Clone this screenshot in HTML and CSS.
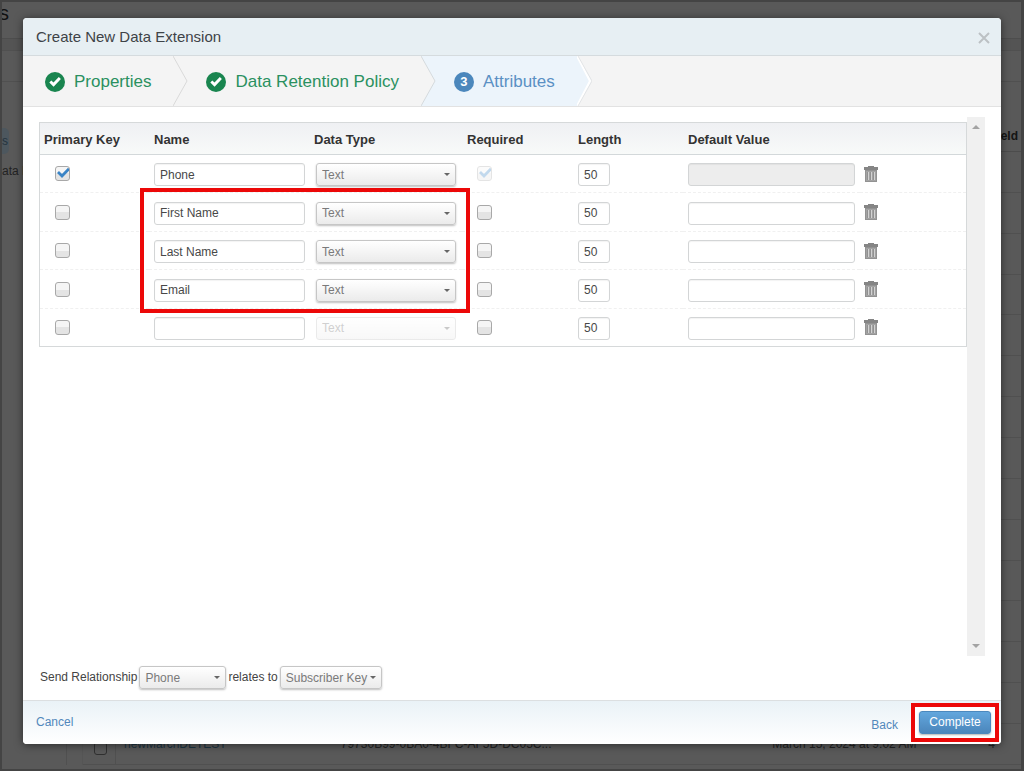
FILE: index.html
```html
<!DOCTYPE html>
<html lang="en">
<head>
<meta charset="utf-8">
<title>Create New Data Extension</title>
<link rel="stylesheet" href="styles.css">
</head>
<body>
<svg class="defs" aria-hidden="true">
  <symbol id="done" viewBox="0 0 20 20">
    <circle cx="10" cy="10" r="10" fill="#19854f"/>
    <path d="M4.3 10.6 6.3 8.5 8.5 10.6 13.8 5 15.9 7 8.6 14.7Z" fill="#fff"/>
  </symbol>
  <symbol id="trash" viewBox="0 0 14 16">
    <path d="M4 0h6v1h4v3H0V1h4z" fill="#858585"/>
    <path d="M1 4h12v12H1z" fill="#a3a3a3"/>
    <path d="M1 4h12v1H1zM1 4h1v12H1zM12 4h1v12h-1zM1 15h12v1H1z" fill="#929292"/>
    <path d="M4 6h1v8H4zM7 6h1v8H7zM10 6h1v8h-1z" fill="#d2d2d2"/>
    <path d="M3 6h1v8H3zM6 6h1v8H6zM9 6h1v8H9z" fill="#919191"/>
  </symbol>
</svg>

<div class="page" aria-hidden="true">
  <div class="page-title">s</div>
  <div class="page-bar"></div>
  <div class="page-bar"></div>
  <div class="page-main">
    <div class="page-side">
      <span class="side-tile">s</span>
      <span class="side-label">ata E</span>
    </div>
    <div class="page-table">
      <div class="page-head">Field Count</div>
      <div class="page-row"></div><div class="page-row"></div><div class="page-row"></div>
      <div class="page-row"></div><div class="page-row"></div><div class="page-row"></div>
      <div class="page-row"></div><div class="page-row"></div><div class="page-row"></div>
      <div class="page-row"></div><div class="page-row"></div><div class="page-row"></div>
      <div class="page-row"></div><div class="page-row"></div>
      <div class="page-row page-record">
        <span class="record-check"><span class="record-box"></span></span>
        <span class="record-name">newMarchDETEST</span>
        <span class="record-key">79730B99-0BA0-4BFC-AF5D-DC05C...</span>
        <span class="record-date">March 15, 2024 at 9:02 AM</span>
        <span>4</span>
      </div>
    </div>
  </div>
</div>

<div class="overlay">
<form class="modal" role="dialog" aria-labelledby="title">
  <header class="modal-head">
    <h1 id="title">Create New Data Extension</h1>
    <button type="button" class="close" aria-label="Close"><svg viewBox="0 0 12 12" width="12" height="12"><path d="M1 1 11 11M11 1 1 11" stroke="#bcc1c4" stroke-width="2"/></svg></button>
  </header>

  <ol class="steps">
    <li class="step">
      <svg class="step-icon"><use href="#done"/></svg><span>Properties</span>
      <svg class="chevron" viewBox="0 0 15 50" preserveAspectRatio="none"><path d="M0 0 14 25 0 50" fill="none" stroke="#d9d9d9"/></svg>
    </li>
    <li class="step">
      <svg class="step-icon"><use href="#done"/></svg><span>Data Retention Policy</span>
      <svg class="chevron" viewBox="0 0 15 50" preserveAspectRatio="none"><path d="M0 0H15V50H0L14 25Z" fill="#ecf4fb"/><path d="M0 0 14 25 0 50" fill="none" stroke="#d5dadd"/></svg>
    </li>
    <li class="step current" aria-current="step">
      <span class="step-icon number">3</span><span>Attributes</span>
      <svg class="chevron" viewBox="0 0 15 50" preserveAspectRatio="none"><path d="M0 0H15V50H0Z" fill="#f4f4f4"/><path d="M0 0 14 25 0 50Z" fill="#ecf4fb"/><path d="M0 0 13 25 0 50" fill="none" stroke="#fff" stroke-width="2"/><path d="M1 0 15 25 1 50" fill="none" stroke="#e2e4e6"/></svg>
    </li>
  </ol>

  <div class="modal-body">
    <div class="scroll-area">
      <div class="table-wrap">
        <table class="fields">
          <colgroup><col class="c-key"><col class="c-name"><col class="c-type"><col class="c-req"><col class="c-len"><col class="c-def"><col></colgroup>
          <thead>
            <tr><th>Primary Key</th><th>Name</th><th>Data Type</th><th>Required</th><th>Length</th><th>Default Value</th><th></th></tr>
          </thead>
          <tbody>
            <tr>
              <td><input type="checkbox" class="check" aria-label="Primary key" checked></td>
              <td><input type="text" class="text" aria-label="Name" value="Phone"></td>
              <td class="type"><select class="select" aria-label="Data type"><option>Text</option></select></td>
              <td><input type="checkbox" class="check" aria-label="Required" checked disabled></td>
              <td><input type="text" class="text length" aria-label="Length" value="50"></td>
              <td><input type="text" class="text" aria-label="Default value" disabled></td>
              <td><button type="button" class="trash" aria-label="Delete"><svg><use href="#trash"/></svg></button></td>
            </tr>
            <tr>
              <td><input type="checkbox" class="check" aria-label="Primary key"></td>
              <td><input type="text" class="text" aria-label="Name" value="First Name"></td>
              <td class="type"><select class="select" aria-label="Data type"><option>Text</option></select></td>
              <td><input type="checkbox" class="check" aria-label="Required"></td>
              <td><input type="text" class="text length" aria-label="Length" value="50"></td>
              <td><input type="text" class="text" aria-label="Default value"></td>
              <td><button type="button" class="trash" aria-label="Delete"><svg><use href="#trash"/></svg></button></td>
            </tr>
            <tr>
              <td><input type="checkbox" class="check" aria-label="Primary key"></td>
              <td><input type="text" class="text" aria-label="Name" value="Last Name"></td>
              <td class="type"><select class="select" aria-label="Data type"><option>Text</option></select></td>
              <td><input type="checkbox" class="check" aria-label="Required"></td>
              <td><input type="text" class="text length" aria-label="Length" value="50"></td>
              <td><input type="text" class="text" aria-label="Default value"></td>
              <td><button type="button" class="trash" aria-label="Delete"><svg><use href="#trash"/></svg></button></td>
            </tr>
            <tr>
              <td><input type="checkbox" class="check" aria-label="Primary key"></td>
              <td><input type="text" class="text" aria-label="Name" value="Email"></td>
              <td class="type"><select class="select" aria-label="Data type"><option>Text</option></select></td>
              <td><input type="checkbox" class="check" aria-label="Required"></td>
              <td><input type="text" class="text length" aria-label="Length" value="50"></td>
              <td><input type="text" class="text" aria-label="Default value"></td>
              <td><button type="button" class="trash" aria-label="Delete"><svg><use href="#trash"/></svg></button></td>
            </tr>
            <tr>
              <td><input type="checkbox" class="check" aria-label="Primary key"></td>
              <td><input type="text" class="text" aria-label="Name"></td>
              <td class="type"><select class="select" aria-label="Data type" disabled><option>Text</option></select></td>
              <td><input type="checkbox" class="check" aria-label="Required"></td>
              <td><input type="text" class="text length" aria-label="Length" value="50"></td>
              <td><input type="text" class="text" aria-label="Default value"></td>
              <td><button type="button" class="trash" aria-label="Delete"><svg><use href="#trash"/></svg></button></td>
            </tr>
          </tbody>
        </table>
        <div class="callout"></div>
      </div>
      <div class="scrollbar" aria-hidden="true">
        <svg viewBox="0 0 8 4" width="8" height="4"><path d="M0 4 4 0 8 4Z" fill="#a3a3a3"/></svg>
        <svg viewBox="0 0 8 4" width="8" height="4"><path d="M0 0 4 4 8 0Z" fill="#a3a3a3"/></svg>
      </div>
    </div>

    <div class="relation">
      <label for="send">Send Relationship</label>
      <select class="select send" id="send"><option>Phone</option></select>
      <label for="relates">relates to</label>
      <select class="select relates" id="relates"><option>Subscriber Key</option></select>
    </div>
  </div>

  <footer class="modal-foot">
    <a href="#" class="cancel">Cancel</a>
    <a href="#" class="back">Back</a>
    <div class="marked"><button type="button" class="primary">Complete</button></div>
  </footer>
</form>
</div>
</body>
</html>
```

FILE: styles.css
```css
* { box-sizing: border-box; }

body {
  margin: 0;
  height: 100vh;
  display: grid;
  grid-template: minmax(0, 1fr) / minmax(0, 1fr);
  overflow: hidden;
  font: 12px/16px "Liberation Sans", Arial, sans-serif;
  color: #444;
}

.defs { position: absolute; width: 0; height: 0; }
.page, .overlay { grid-area: 1 / 1; min-width: 0; min-height: 0; }

/* Dimmed page behind the dialog */
.page {
  display: flex;
  flex-direction: column;
  border: 2px solid #444;
  border-right-width: 3px;
  background: #595959;
  color: #222;
  overflow: hidden;
}
.page-title {
  height: 37px;
  margin-left: -3px;
  border-bottom: 1px solid #4d4d4d;
  font-size: 20px;
  line-height: 22px;
  color: #111;
}
.page-bar { height: 12px; border-bottom: 1px solid #505050; background: #545454; }
.page-bar + .page-bar { height: 31px; background: #595959; border-bottom-color: #505050; }
.page-main { flex: 1; display: flex; min-height: 0; margin-bottom: 4px; }
.page-side {
  width: 65px;
  display: flex;
  flex-direction: column;
  padding-top: 46px;
  border-right: 1px solid #505050;
}
.side-tile {
  width: 7px;
  height: 26px;
  border-radius: 0 5px 5px 0;
  background: #4d575e;
  color: #243440;
  line-height: 26px;
  overflow: hidden;
}
.side-label { margin-top: 9px; white-space: nowrap; }
.page-table { flex: 1; display: flex; flex-direction: column; margin-left: 15px; border-left: 1px solid #555; }
.page-head {
  height: 70px;
  margin-right: -35px;
  padding-top: 46px;
  border-bottom: 1px solid #4c4c4c;
  font-weight: bold;
  font-size: 12px;
  text-align: right;
  color: #141414;
}
.page-row { flex: 1; border-bottom: 1px solid #505050; }
.page-record { display: flex; align-items: center; justify-content: flex-end; gap: 8px; padding-right: 26px; white-space: nowrap; }
.record-check { width: 33px; height: 100%; padding: 18px 0 0 11px; border-right: 1px solid #505050; }
.record-box { display: block; width: 13px; height: 13px; border: 1px solid #303030; border-radius: 3px; }
.record-name { flex: 208; color: #1d3442; }
.record-key { flex: 422; }
.record-date { width: 208px; }

/* Dialog */
.overlay { position: relative; display: flex; padding: 18px 23px 27px; }
.modal {
  flex: 1;
  min-width: 0;
  display: flex;
  flex-direction: column;
  border-radius: 4px;
  background: #fff;
  box-shadow: 0 1px 8px rgba(0, 0, 0, .5);
  overflow: hidden;
}
.modal-head {
  display: flex;
  align-items: center;
  justify-content: space-between;
  padding: 8px 11px 8px 13px;
  border-bottom: 1px solid #d5dbde;
  background: #e7eff3;
}
.modal-head h1 { margin: 0; font-size: 15px; line-height: 21px; font-weight: normal; color: #3e4347; }
.close { display: flex; padding: 3px 0 0; border: 0; background: none; }

.steps {
  display: flex;
  margin: 0;
  padding: 0 0 0 4px;
  list-style: none;
  border-bottom: 1px solid #e2e2e2;
  background: #f4f4f4;
}
.step {
  display: flex;
  align-items: center;
  gap: 9px;
  height: 50px;
  padding-left: 18px;
  font-size: 17px;
  line-height: 20px;
  color: #2a9060;
}
.step.current { background: #ecf4fb; color: #5a90c4; }
.step span:not(.number) { padding-top: 2px; }
.step-icon { width: 20px; height: 20px; flex: none; margin-top: 2px; }
.number {
  border-radius: 50%;
  background: #4b87bc;
  color: #fff;
  font-size: 13px;
  font-weight: bold;
  text-align: center;
}
.chevron { width: 15px; height: 50px; margin-left: 13px; }

.modal-body { flex: 1; min-height: 0; display: flex; flex-direction: column; padding: 10px 16px 11px; }
.scroll-area { flex: 1; min-height: 0; display: flex; }
.table-wrap { position: relative; flex: 1; min-width: 0; padding-top: 5px; }
.fields {
  width: 100%;
  height: 225px;
  table-layout: fixed;
  border-collapse: separate;
  border-spacing: 0;
  border: 1px solid #d6d9da;
}
.c-key { width: 109px; }
.c-name { width: 160px; }
.c-type { width: 153px; }
.c-req { width: 111px; }
.c-len { width: 110px; }
.c-def { width: 177px; }
.fields th {
  height: 32px;
  padding: 3px 5px 0;
  border-bottom: 1px solid #d3d8da;
  background: linear-gradient(#eff0f3, #f8faf9);
  font-size: 13px;
  line-height: 16px;
  text-align: left;
  color: #333;
}
.fields td { padding: 2px 5px 0; border-bottom: 1px dashed #f0f0f0; vertical-align: middle; }
.fields th:first-child { padding-left: 4px; }
.fields td:nth-child(2) { padding-right: 4px; }
.fields tr:last-child td { border-bottom: 0; }
.fields td.type { padding-left: 7px; }

.text, .select {
  display: block;
  height: 23px;
  border: 1px solid #d3d5d6;
  border-radius: 3px;
  font: 12px/16px "Liberation Sans", Arial, sans-serif;
}
.text { width: 100%; padding: 0 5px; background: #fff; color: #484848; box-shadow: inset 0 1px 1px rgba(0, 0, 0, .05); }
.text:disabled { background: #ededed; }
.text.length { width: 32px; }
.fields .select { width: 140px; }
.select {
  appearance: none;
  padding: 0 5px;
  border-color: #c6c6c6;
  background:
    url("data:image/svg+xml,%3Csvg xmlns='http://www.w3.org/2000/svg' width='6' height='3'%3E%3Cpath d='M0 0h6L3 3z' fill='%23666'/%3E%3C/svg%3E") no-repeat right 5px center,
    linear-gradient(#fff, #ebebeb);
  color: #7a7a7a;
  box-shadow: 0 1px 2px rgba(0, 0, 0, .25);
}
.select:disabled { opacity: .35; box-shadow: none; }

.check {
  appearance: none;
  display: block;
  width: 15px;
  height: 15px;
  margin: -2px 0 0 10px;
  border: 1px solid #a8a8a8;
  border-radius: 3px;
  background: linear-gradient(#f5f5f5 50%, #e4e4e4 50%);
}
.check:checked {
  background:
    url("data:image/svg+xml,%3Csvg xmlns='http://www.w3.org/2000/svg' width='15' height='14'%3E%3Cpath d='M3 6 7 10 14 2.8' fill='none' stroke='%233a84c6' stroke-width='2.8'/%3E%3C/svg%3E") no-repeat 0 0 border-box,
    linear-gradient(#f5f5f5 50%, #e4e4e4 50%);
}
.check:disabled { opacity: .3; }

.trash { display: block; margin: -2px 0 0 -1px; padding: 0; border: 0; background: none; }
.trash svg { display: block; width: 14px; height: 16px; }

.callout { position: absolute; left: 101px; top: 71px; width: 330px; height: 125px; border: 4px solid #ec0808; pointer-events: none; }

.scrollbar {
  width: 18px;
  display: flex;
  flex-direction: column;
  align-items: center;
  justify-content: space-between;
  padding: 8px 0;
  background: #f0f0f0;
}

.relation { display: flex; align-items: center; gap: 2px; padding: 10px 1px 0; }
.relation label { padding-bottom: 2px; }
.send { width: 87px; }
.relates { width: 102px; }

.modal-foot {
  display: flex;
  align-items: center;
  padding: 2px 2px 2px 13px;
  border-top: 1px solid #dcdfe1;
  background: linear-gradient(#eaf2f7, #fff);
}
.modal-foot a { color: #5288bb; text-decoration: none; }
.cancel { padding-bottom: 2px; }
.back { margin: 4px 13px 0 auto; }
.marked { padding: 4px; border: 4px solid #ec0808; background: #fff; }
.primary {
  display: block;
  width: 72px;
  height: 23px;
  padding: 0 0 2px;
  border: 1px solid #4b88bd;
  border-radius: 3px;
  background: linear-gradient(#62a6dd, #4b86bb);
  color: #fff;
  font: 12px/16px "Liberation Sans", Arial, sans-serif;
  box-shadow: 0 1px 2px rgba(0, 0, 0, .3);
}
```
